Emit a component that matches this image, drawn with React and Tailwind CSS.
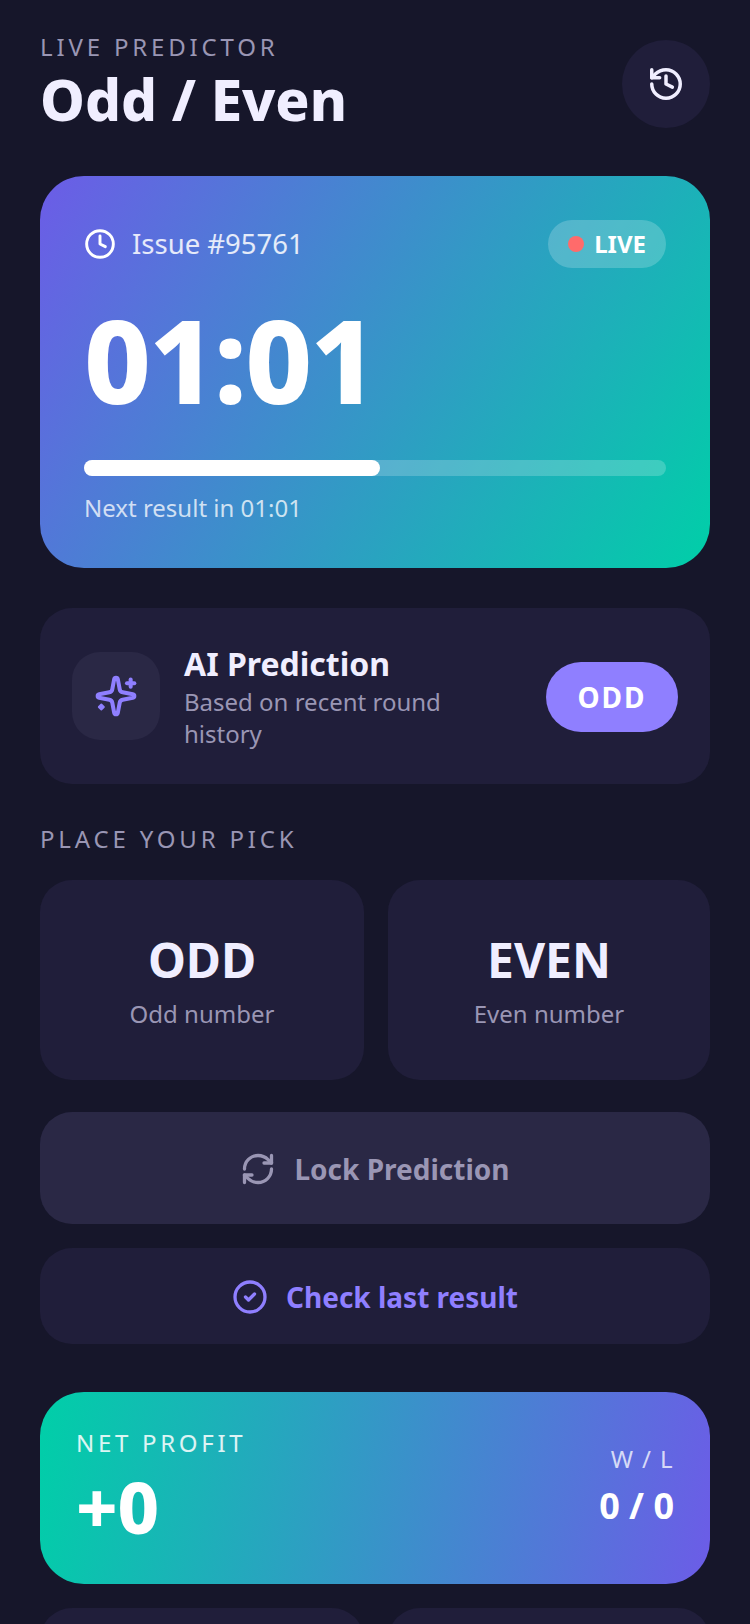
import React from "react";
import { History, Clock, RefreshCw, CircleCheck } from "lucide-react";

export default function App() {
  return (
    <div className="h-[1624px] overflow-hidden bg-[#16162a] px-10 pt-[32px] text-[#f0eeff] antialiased font-['Noto_Sans',sans-serif]">
      <header className="flex items-start justify-between h-[144px]">
        <div>
          <div className="text-[24px] leading-[30px] tracking-[3.84px] text-[#9a96b4] font-normal">LIVE PREDICTOR</div>
          <h1 className="mt-[4px] text-[56.6px] leading-[66px] font-extrabold">Odd / Even</h1>
        </div>
        <button className="mt-2 flex h-[88px] w-[88px] items-center justify-center rounded-full bg-[#201e3a] text-[#f0eeff]">
          <History size={38} strokeWidth={2.2} />
        </button>
      </header>

      <section className="h-[392px] rounded-[44px] bg-[linear-gradient(120deg,#6c5ce7_0%,#00cfa8_100%)] px-[44px] pt-[44px] text-white">
        <div className="flex items-center justify-between h-[48px]">
          <div className="flex items-center gap-4 text-[27.5px] text-white/85">
            <Clock size={32} strokeWidth={2.2} className="text-white" />
            <span>Issue #95761</span>
          </div>
          <div className="flex h-[48px] items-center gap-[10px] rounded-full bg-white/20 pl-[20px] pr-5 text-[24px] font-bold">
            <span className="h-4 w-4 rounded-full bg-[#ff6b6b]" />
            LIVE
          </div>
        </div>
        <div className="mt-[25px] text-[116px] leading-[132px] font-extrabold tracking-[-2px]">01:01</div>
        <div className="mt-[35px] h-4 rounded-full bg-white/20">
          <div className="h-4 w-[50.8%] rounded-full bg-white" />
        </div>
        <div className="mt-[16px] text-[24px] leading-[32px] text-white/75">Next result in 01:01</div>
      </section>

      <section className="mt-10 flex h-[176px] items-center rounded-[32px] bg-[#201e3a] pl-8 pr-8">
        <div className="flex h-[88px] w-[88px] shrink-0 items-center justify-center rounded-[28px] bg-[#2a2845] text-[#8f7fff]">
          <svg width="44" height="44" viewBox="0 0 24 24" fill="none" stroke="currentColor" strokeWidth="2.2" strokeLinecap="round" strokeLinejoin="round">
            <path d="M11.017 2.814a1 1 0 0 1 1.966 0l1.051 5.558a2 2 0 0 0 1.594 1.594l5.558 1.051a1 1 0 0 1 0 1.966l-5.558 1.051a2 2 0 0 0-1.594 1.594l-1.051 5.558a1 1 0 0 1-1.966 0l-1.051-5.558a2 2 0 0 0-1.594-1.594l-5.558-1.051a1 1 0 0 1 0-1.966l5.558-1.051a2 2 0 0 0 1.594-1.594z" />
            <path d="M20 3v4" />
            <path d="M22 5h-4" />
            <path d="M4 16.6l1.4 1.4-1.4 1.4-1.4-1.4z" fill="currentColor" strokeWidth="1" />
          </svg>
        </div>
        <div className="ml-6 w-[290px] pt-[2px]">
          <div className="text-[32px] leading-[40px] font-bold">AI Prediction</div>
          <div className="mt-[2px] text-[24px] leading-[32px] text-[#9a96b4]">Based on recent round history</div>
        </div>
        <div className="ml-auto mt-[2px] flex h-[70px] w-[132px] items-center justify-center rounded-full bg-[#8f7fff] text-[28px] font-bold tracking-[2px] text-white">ODD</div>
      </section>

      <div className="mt-[39px] text-[24px] leading-[32px] tracking-[3.84px] text-[#9a96b4]">PLACE YOUR PICK</div>

      <div className="mt-[25px] grid grid-cols-[324px_322px] gap-6">
        <button className="flex h-[200px] flex-col items-center justify-center rounded-[32px] bg-[#201e3a]">
          <span className="text-[48px] leading-[60px] font-bold">ODD</span>
          <span className="mt-[8px] text-[24px] leading-[32px] text-[#9a96b4]">Odd number</span>
        </button>
        <button className="flex h-[200px] flex-col items-center justify-center rounded-[32px] bg-[#201e3a]">
          <span className="text-[48px] leading-[60px] font-bold">EVEN</span>
          <span className="mt-[8px] text-[24px] leading-[32px] text-[#9a96b4]">Even number</span>
        </button>
      </div>

      <button className="mt-8 flex h-[112px] w-full items-center justify-center gap-[18px] rounded-[32px] bg-[#2a2845] pt-[1px] text-[28px] font-bold text-[#9a96b4]">
        <RefreshCw size={36} strokeWidth={2.2} />
        Lock Prediction
      </button>
      <button className="mt-6 flex h-[96px] w-full items-center justify-center gap-[18px] rounded-[32px] bg-[#201e3a] pt-[1px] text-[28px] font-bold text-[#8f7fff]">
        <CircleCheck size={36} strokeWidth={2.2} />
        Check last result
      </button>

      <section className="mt-12 flex h-[192px] justify-between rounded-[44px] bg-[linear-gradient(100deg,#00cfa8_0%,#6c5ce7_100%)] px-9 pt-[35px] text-white">
        <div>
          <div className="text-[24px] leading-[32px] tracking-[3.7px] text-white/85">NET PROFIT</div>
          <div className="mt-[5px] text-[72px] leading-[84px] font-extrabold">+0</div>
        </div>
        <div className="pt-[16px] text-right">
          <div className="text-[24px] leading-[32px] tracking-[1.4px] text-white/75">W / L</div>
          <div className="mt-[8px] text-[36px] leading-[46px] font-bold">0 / 0</div>
        </div>
      </section>

      <div className="mt-6 grid grid-cols-[324px_322px] gap-6">
        <div className="h-[120px] rounded-[32px] bg-[#201e3a]" />
        <div className="h-[120px] rounded-[32px] bg-[#201e3a]" />
      </div>
    </div>
  );
}
